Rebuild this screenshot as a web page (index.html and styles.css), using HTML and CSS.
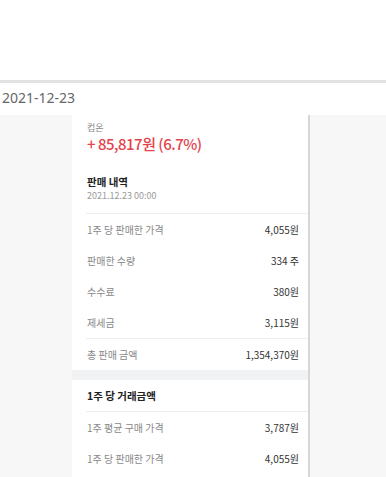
FILE: index.html
```html
<!DOCTYPE html>
<html>
<head>
    <meta charset="UTF-8">
    <meta name="viewport" content="width=device-width, initial-scale=1"/>
    <title>판매 내역</title>
    <link rel="stylesheet" href="styles.css">
</head>
<body class="body">
    <header class="top"></header>
    <div class="day">2021-12-23</div>

    <main class="detail">
        <section class="card">
            <div class="summary">
                <div class="stock">컴온</div>
                <div class="profit">+ 85,817원 (6.7%)</div>
                <div class="title">판매 내역</div>
                <div class="time">2021.12.23 00:00</div>
            </div>

            <div class="list">
                <div class="row"><span class="label">1주 당 판매한 가격</span><span class="value">4,055원</span></div>
                <div class="row"><span class="label">판매한 수량</span><span class="value">334 주</span></div>
                <div class="row"><span class="label">수수료</span><span class="value">380원</span></div>
                <div class="row"><span class="label">제세금</span><span class="value">3,115원</span></div>
            </div>
            <div class="list">
                <div class="row"><span class="label">총 판매 금액</span><span class="value">1,354,370원</span></div>
            </div>

            <div class="band"></div>

            <div class="subhead">1주 당 거래금액</div>
            <div class="list">
                <div class="row"><span class="label">1주 평균 구매 가격</span><span class="value">3,787원</span></div>
                <div class="row"><span class="label">1주 당 판매한 가격</span><span class="value">4,055원</span></div>
            </div>
        </section>
    </main>
</body>
</html>
```

FILE: styles.css
```css
.body{
    margin:0px;
    font-family: "Noto Sans CJK KR", "Noto Sans", sans-serif;
    background:#fff;
}
.top{
    height:80px;
    border-bottom:3px solid #e2e2e2;
    box-shadow: 0 -1px 1px #f0f0f0;
}
.day{
    font-family: "Noto Sans", "Open Sans", sans-serif;
    font-size:14px; color:#666;
    height:32px; line-height:30px;
    padding-left:2px;
}

.detail{
    background:#f7f7f7;
    padding-left:72px;
}
.card{
    width:236px;
    background:#fff;
    border-right:2px solid #d6d6d6;
    padding-bottom:30px;
}

.summary{
    padding:7px 15px 10px;
}
.stock{
    font-size:9px; line-height:11px; color:#888;
}
.profit{
    margin-top:2px;
    font-size:15px; line-height:18px; color:#e4434b;
    font-weight:500; letter-spacing:-0.5px;
}
.title{
    margin-top:22px;
    font-size:10.5px; line-height:14px; font-weight:700; color:#222;
}
.time{
    font-size:9px; line-height:14px; color:#999;
}

.list{
    margin-left:14px;
    border-top:1px solid #eee;
}
.row{
    height:31px;
    display:flex; justify-content:space-between; align-items:center;
    padding:0 9px 0 1px;
    font-size:10px;
}
.label{ color:#888; }
.value{ color:#333; }

.band{
    height:10px;
    background:#f1f2f4;
}
.subhead{
    height:31px; line-height:31px;
    padding-left:15px;
    font-size:10.5px; font-weight:700; color:#222;
}
```
